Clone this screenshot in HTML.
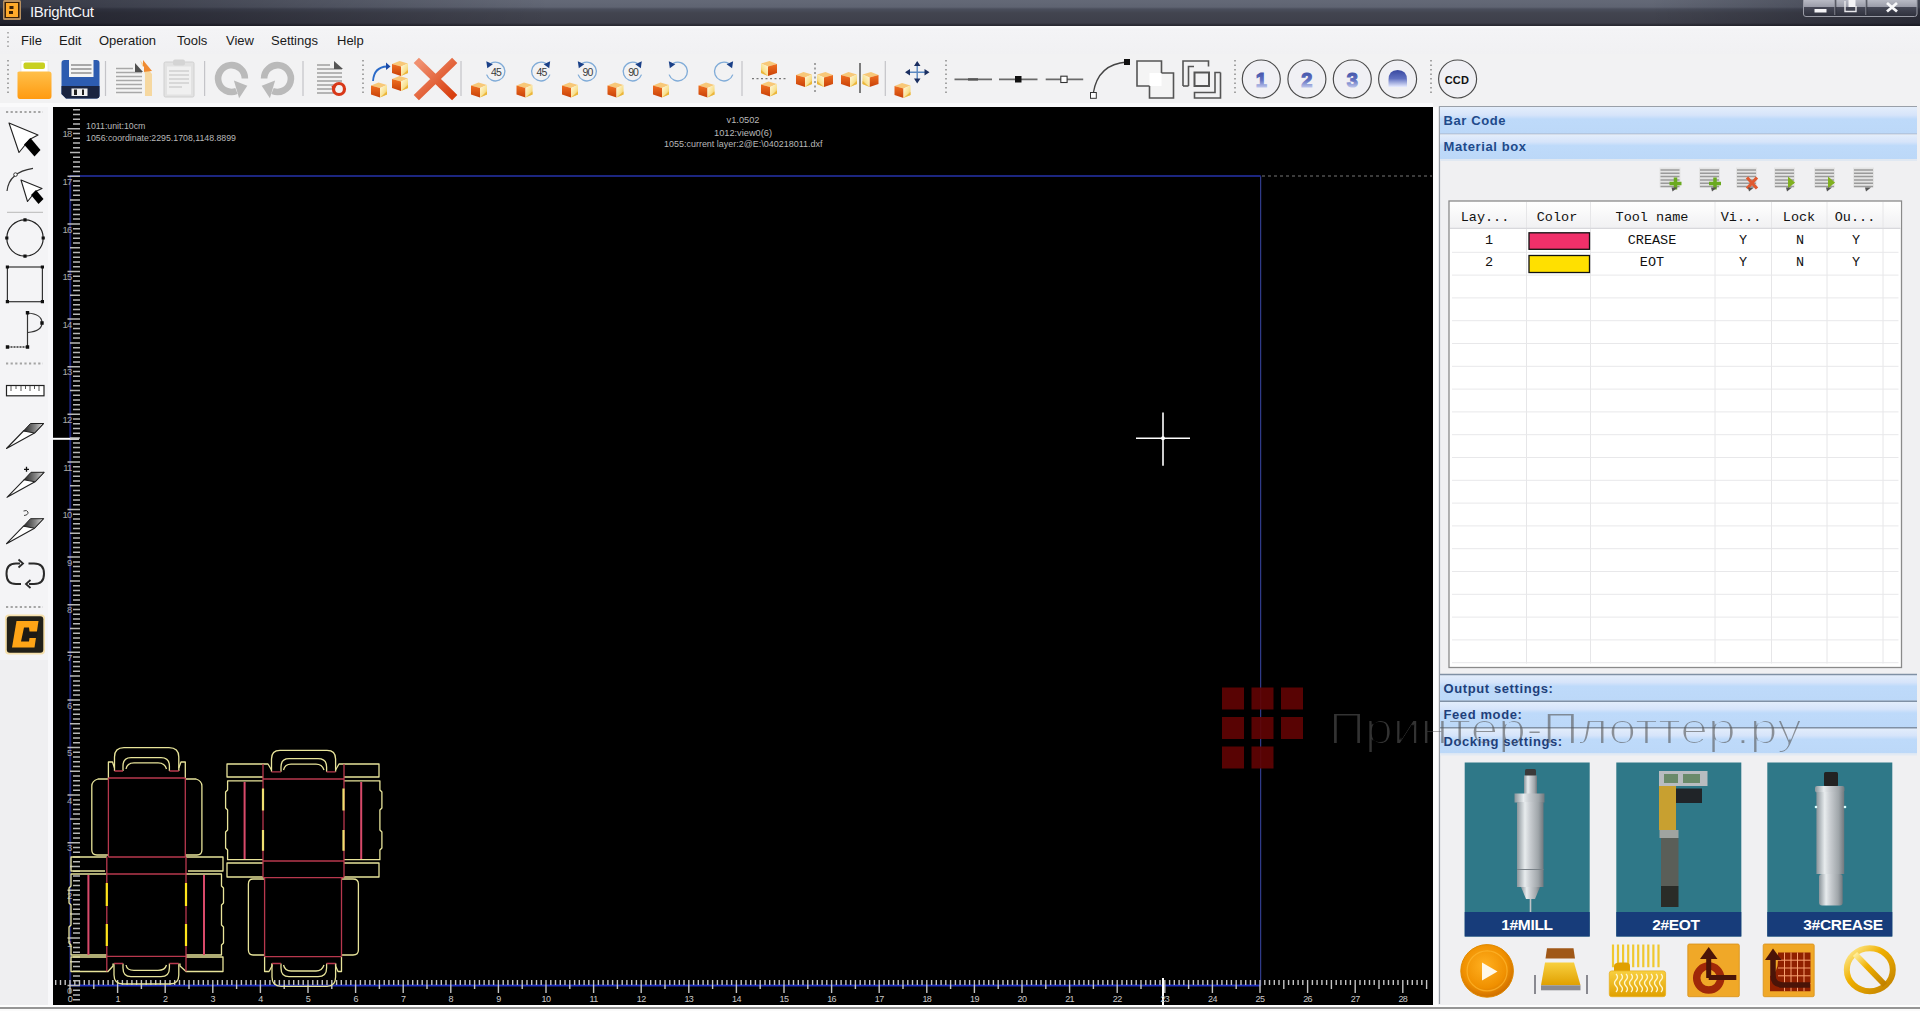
<!DOCTYPE html>
<html><head><meta charset="utf-8">
<style>
*{margin:0;padding:0;box-sizing:border-box}
html,body{width:1920px;height:1011px;overflow:hidden;background:#f2f2f4;font-family:"Liberation Sans",sans-serif}
.abs{position:absolute}
svg.full{position:absolute;left:0;top:0;width:1920px;height:1011px;overflow:visible}
#title{left:0;top:0;width:1920px;height:26px;background:linear-gradient(#646977 0px,#5f6472 7px,#4a4e5c 9px,#42444f 13px,#3e3f4a 23px,#2a2a33 25px,#2a2a33 26px)}
#title .t{left:30px;top:3px;color:#f4f4f8;font-size:15px;letter-spacing:-0.3px}
#title .shade{left:0;top:0;width:1920px;height:26px;background:linear-gradient(to right,rgba(0,0,10,0.45) 0px,rgba(0,0,10,0.3) 200px,rgba(0,0,0,0) 550px,rgba(0,0,0,0) 1650px,rgba(0,0,10,0.35) 1920px)}
#menubar{left:0;top:26px;width:1920px;height:28px;background:linear-gradient(#fdfdfd 0px,#f4f4f6 3px,#f1f1f3 28px)}
#menubar span{position:absolute;top:7px;font-size:13px;color:#1a1a1a}
#toolbar{left:0;top:54px;width:1920px;height:53px;background:#f2f2f3}
#leftp{left:0;top:107px;width:53px;height:898px;background:#efeff1}
#canvas{left:53px;top:107px;width:1380px;height:898px;background:#000}
#rightp{left:1433px;top:107px;width:487px;height:898px;background:#f0f0f2}
#bottom{left:0;top:1005px;width:1920px;height:6px;background:linear-gradient(#fdfdfd 0,#fdfdfd 2.5px,#959595 2.5px,#959595 4.3px,#fafafa 4.3px)}
#gap{left:1433px;top:107px;width:5px;height:898px;background:#fbfbfc}
</style></head><body>
<div id="title" class="abs">
  <div class="shade abs"></div>
  <div class="t abs">IBrightCut</div>
</div>
<div id="menubar" class="abs">
  <span style="left:21px">File</span>
  <span style="left:59px">Edit</span>
  <span style="left:99px">Operation</span>
  <span style="left:177px">Tools</span>
  <span style="left:226px">View</span>
  <span style="left:271px">Settings</span>
  <span style="left:337px">Help</span>
</div>
<div id="toolbar" class="abs"></div>
<div id="leftp" class="abs"></div>
<div id="canvas" class="abs"></div>
<div id="rightp" class="abs"></div>
<div id="gap" class="abs"></div>
<div id="bottom" class="abs"></div>
<svg class="full" viewBox="0 0 1920 1011">
<defs>
<linearGradient id="gWin" x1="0" y1="0" x2="0" y2="1"><stop offset="0" stop-color="#b8bac4"/><stop offset="0.42" stop-color="#9a9ca8"/><stop offset="0.45" stop-color="#464856"/><stop offset="1" stop-color="#2e303c"/></linearGradient>
</defs>
<!-- app icon -->
<rect x="3" y="0" width="18" height="20" rx="1.5" fill="#b89060"/>
<rect x="4.5" y="2" width="15" height="16" fill="#3a2006"/>
<rect x="6" y="3" width="12" height="14" fill="#ffaa2a"/>
<path d="M9.5 6H13.5V9H9.5ZM9 11H13V14H9Z" fill="#3a2006"/>
<!-- window controls -->
<path d="M1803.5 0V14Q1803.5 16.5 1806 16.5H1914.5Q1917 16.5 1917 14V0" fill="url(#gWin)" stroke="#9a9ca6" stroke-width="1"/>
<path d="M1835 0V15M1866 0V15" stroke="#8a8c96" stroke-width="1.3"/>
<path d="M1835.8 0V15M1866.8 0V15" stroke="#2a2c36" stroke-width="0.8"/>
<rect x="1814.5" y="9" width="12" height="3.5" fill="#f4f4f6"/>
<path d="M1845 1V11.5H1856V6" fill="none" stroke="#e8e8ec" stroke-width="1.4"/>
<rect x="1848.5" y="0" width="7" height="7" fill="#f4f4f6"/>
<path d="M1887 3L1897 11.5M1897 3L1887 11.5" stroke="#f8f8fa" stroke-width="2.8"/>

<path d="M8 32V48" stroke="#9a9a9a" stroke-width="1.5" stroke-dasharray="1.5 3"/>
<defs>
<linearGradient id="gFold" x1="0" y1="0" x2="0" y2="1"><stop offset="0" stop-color="#ffc04a"/><stop offset="1" stop-color="#ff9a10"/></linearGradient>
<linearGradient id="gCubeL" x1="0" y1="0" x2="0" y2="1"><stop offset="0" stop-color="#f07020"/><stop offset="1" stop-color="#c84008"/></linearGradient>
<linearGradient id="gCubeR" x1="0" y1="0" x2="1" y2="1"><stop offset="0" stop-color="#fffbe0"/><stop offset="0.6" stop-color="#f8e090"/><stop offset="1" stop-color="#f0b020"/></linearGradient>
<linearGradient id="gX" x1="0" y1="0" x2="1" y2="1"><stop offset="0" stop-color="#f09070"/><stop offset="1" stop-color="#d84010"/></linearGradient>
<linearGradient id="gNum" x1="0" y1="0" x2="0" y2="1"><stop offset="0" stop-color="#3848a0"/><stop offset="0.5" stop-color="#6070c0"/><stop offset="1" stop-color="#e8ecff"/></linearGradient>
<g id="cube">
<path d="M0 3L7.5 0L16 2.5L9 5.5Z" fill="#f8c878"/>
<path d="M0 3L9 5.5V15L0 12Z" fill="url(#gCubeL)"/>
<path d="M9 5.5L16 2.5V12L9 15Z" fill="url(#gCubeR)"/>
<path d="M9 15L16 12V9Z" fill="#e8b030" opacity="0.8"/>
</g>
<g id="cubeM" transform="translate(16 0) scale(-1 1)"><use href="#cube"/></g>
<g id="grip"><path d="M0 0V36" stroke="#8a8a8a" stroke-width="1.5" stroke-dasharray="1.5 3"/></g>
<g id="rcirc" fill="none"><circle cx="0" cy="0" r="9.5" stroke="#7aaad8" stroke-width="1.2"/></g>
</defs>
<!-- grips & separators -->
<use href="#grip" x="8" y="60"/>
<use href="#grip" x="363" y="60"/>
<use href="#grip" x="946" y="60"/>
<use href="#grip" x="1235" y="60"/>
<use href="#grip" x="1431" y="60"/>
<path d="M105.5 61V96M204.6 61V96M303 61V96M461 61V96M742 61V96M885.3 61V96" stroke="#c4c4c8" stroke-width="1.2"/>
<!-- folder -->
<rect x="21" y="60.5" width="27" height="16" fill="#fff" stroke="#e0e0e0" stroke-width="0.6"/>
<rect x="23.5" y="62.5" width="21.5" height="6.5" rx="2" fill="#c8d020"/>
<rect x="23" y="72" width="6" height="2.5" fill="#8aa8d8"/>
<path d="M17.5 73.5Q17 71.5 19.5 71.5H49Q51.5 71.5 51.5 74V96Q51.5 99 49 99H20Q17.5 99 17.5 96Z" fill="url(#gFold)"/>
<!-- floppy -->
<path d="M61.5 63Q61.5 60 64.5 60H96.5Q99.5 60 99.5 63V95.5Q99.5 98.5 96.5 98.5H66L61.5 94Z" fill="#2d5cb0"/>
<path d="M61.5 86V94L66 98.5H96.5Q99.5 98.5 99.5 95.5V86Z" fill="#1a2440"/>
<rect x="69" y="60" width="24.5" height="17" fill="#f4f4f4"/>
<path d="M71 65H91.5M71 69H91.5M71 73H91.5" stroke="#909090" stroke-width="1.5"/>
<rect x="71.5" y="88.5" width="16" height="7.5" fill="#f0f0f0"/>
<rect x="74" y="89.5" width="3" height="5.5" fill="#222"/><rect x="82" y="89.5" width="2" height="5.5" fill="#222"/>
<!-- copy -->
<path d="M140 60L152 74V96H145V74Z" fill="#f6d8a0"/>
<path d="M143 60L152 71L143 72Z" fill="#f08a30"/>
<rect x="115" y="66.5" width="29" height="30" fill="#f4f4f4"/>
<path d="M116 68.5H133M116 72.5H142M116 76.5H142M116 80.5H142M116 84.5H142M116 88.5H142M116 92.5H142" stroke="#a8a8a8" stroke-width="1.6"/>
<path d="M135 63L143 72H135Z" fill="#505050"/>
<!-- clipboard gray -->
<rect x="164" y="62" width="30" height="35" rx="1.5" fill="#e2e2e2" stroke="#d0d0d0"/>
<rect x="173" y="59.5" width="12" height="6" rx="2" fill="#d4d4d4"/>
<rect x="167" y="66.5" width="24" height="28" fill="#f0f0f0"/>
<path d="M169 71H189M169 75H189M169 79H189M169 83H189M169 87H182" stroke="#cfcfcf" stroke-width="1.4"/>
<!-- redo/undo gray -->
<path d="M244.9 78.5A13.4 13.4 0 1 0 236.5 91" fill="none" stroke="#bababa" stroke-width="6.6"/>
<path d="M233.9 80.4L247.3 85.7L239.1 98.2Z" fill="#bababa"/>
<path d="M264.1 78.5A13.4 13.4 0 1 1 272.5 91" fill="none" stroke="#bababa" stroke-width="6.6"/>
<path d="M275.1 80.4L261.7 85.7L269.9 98.2Z" fill="#bababa"/>
<!-- doc with red arrow -->
<rect x="316" y="62" width="26" height="34" fill="#f2f2f2"/>
<path d="M317 65H330M317 69H342M317 73H342M317 77H342M317 81H342M317 85H334M317 89H334M317 93H334" stroke="#a0a0a0" stroke-width="1.6"/>
<path d="M334 61L343 69H334Z" fill="#555"/>
<circle cx="339" cy="89" r="5.5" fill="none" stroke="#d83818" stroke-width="3.2"/>
<path d="M331.5 86L337 85L333 92Z" fill="#d83818"/>
<!-- cubes with arrow -->
<use href="#cube" x="371" y="82.5"/>
<use href="#cube" x="392" y="61"/>
<use href="#cube" x="392" y="76"/>
<path d="M373 81Q374 67 387 66.5" fill="none" stroke="#2a6ac8" stroke-width="1.8"/>
<path d="M386 62.5L390.5 66.5L386 70Z" fill="#1a4aa8"/>
<!-- red X -->
<path d="M419 63L452 95M452 63L419 95" stroke="url(#gX)" stroke-width="7.5" stroke-linecap="square"/>
<!-- rotate icons -->
<g font-family="Liberation Sans, sans-serif" font-size="10.5" fill="#3a3a3a" text-anchor="middle" letter-spacing="-0.9">
<use href="#cube" x="471" y="82.5"/>
<path d="M490.8 63.4A9.4 9.4 0 1 1 486.6 74.6" fill="none" stroke="#80acd8" stroke-width="1.3"/>
<path d="M486.3 61.3L492.8 64.3L487.3 68.3Z" fill="#1a4088"/>
<text x="496.0" y="76.2">45</text>
<use href="#cube" x="516.5" y="82.5"/>
<path d="M545.7 63.4A9.4 9.4 0 1 0 549.9 74.6" fill="none" stroke="#80acd8" stroke-width="1.3"/>
<path d="M550.2 61.3L543.7 64.3L549.2 68.3Z" fill="#1a4088"/>
<text x="541.5" y="76.2">45</text>
<use href="#cube" x="562" y="82.5"/>
<path d="M582.3 63.4A9.4 9.4 0 1 1 578.1 74.6" fill="none" stroke="#80acd8" stroke-width="1.3"/>
<path d="M577.8 61.3L584.3 64.3L578.8 68.3Z" fill="#1a4088"/>
<text x="587.5" y="76.2">90</text>
<use href="#cube" x="607.5" y="82.5"/>
<path d="M637.3 63.4A9.4 9.4 0 1 0 641.5 74.6" fill="none" stroke="#80acd8" stroke-width="1.3"/>
<path d="M641.8 61.3L635.3 64.3L640.8 68.3Z" fill="#1a4088"/>
<text x="633.1" y="76.2">90</text>
<use href="#cube" x="653" y="82.5"/>
<path d="M673.3 63.4A9.4 9.4 0 1 1 669.1 74.6" fill="none" stroke="#80acd8" stroke-width="1.3"/>
<path d="M668.8 61.3L675.3 64.3L669.8 68.3Z" fill="#1a4088"/>
<use href="#cube" x="698.5" y="82.5"/>
<path d="M728.6 63.4A9.4 9.4 0 1 0 732.8 74.6" fill="none" stroke="#80acd8" stroke-width="1.3"/>
<path d="M733.1 61.3L726.6 64.3L732.1 68.3Z" fill="#1a4088"/>
</g>
<!-- mirror icons -->
<use href="#cubeM" x="761" y="61"/>
<path d="M752 78.7H786" stroke="#777" stroke-width="1.3" stroke-dasharray="2 2.5"/>
<use href="#cube" x="761" y="81.5"/>
<use href="#cube" x="796" y="72"/>
<path d="M815 63V93" stroke="#777" stroke-width="1.3" stroke-dasharray="2 2.5"/>
<use href="#cubeM" x="817" y="72"/>
<use href="#cube" x="841" y="72"/>
<path d="M860 63V93" stroke="#555" stroke-width="1.5"/>
<use href="#cubeM" x="862.5" y="72"/>
<!-- move -->
<use href="#cube" x="894.5" y="83"/>
<path d="M917.2 64V80.5M908 72.2H926.5" stroke="#5a88c0" stroke-width="1.4"/>
<path d="M914 66L917.2 61L920.5 66ZM914 78.5L917.2 83.5L920.5 78.5ZM910 69L905 72.2L910 75.5ZM924.5 69L929.5 72.2L924.5 75.5Z" fill="#1a2e60"/>
<!-- line types -->
<path d="M954.5 79.4H992" stroke="#6a6a6a" stroke-width="1.6"/>
<path d="M968 79.4H978" stroke="#555" stroke-width="2.4"/>
<path d="M999 79.4H1037.5" stroke="#6a6a6a" stroke-width="1.6"/>
<rect x="1015" y="76" width="6.5" height="6.5" fill="#111"/>
<path d="M1045.7 79.4H1083.2" stroke="#6a6a6a" stroke-width="1.6"/>
<rect x="1060.8" y="76.2" width="6.3" height="6.3" fill="#fff" stroke="#333" stroke-width="1.1"/>
<path d="M1093.3 93Q1098 64 1127 62" fill="none" stroke="#444" stroke-width="1.3"/>
<rect x="1124" y="59" width="6" height="6" fill="#111"/>
<rect x="1090.5" y="92.5" width="5.8" height="5.8" fill="#fff" stroke="#333" stroke-width="1"/>
<!-- union squares -->
<path d="M1137 61H1161.5V73H1173.5V98H1149.5V86H1137Z" fill="#f4f4f4" stroke="#555" stroke-width="1.6"/>
<rect x="1149.5" y="73" width="12" height="13" fill="#fff"/>
<!-- nested -->
<g fill="none" stroke="#555" stroke-width="1.6">
<path d="M1183 86V61H1208.5V66.5M1188.5 86V66.5H1194"/>
<path d="M1183 86H1188.5"/>
<path d="M1220.5 72.5V98H1194.5V92.5H1215V72.5H1220.5"/>
<rect x="1194.5" y="72.5" width="14.5" height="13.5" stroke-width="2"/>
</g>
<!-- circles -->
<g fill="#f0f0f4" stroke="#4a4a4a" stroke-width="1.15">
<circle cx="1261.3" cy="79" r="19"/><circle cx="1306.9" cy="79" r="19"/><circle cx="1352.3" cy="79" r="19"/><circle cx="1397.6" cy="79" r="19"/><circle cx="1457.6" cy="79" r="19"/>
</g>
<g font-family="Liberation Sans, sans-serif" font-weight="bold" font-size="20" fill="url(#gNum)" stroke="url(#gNum)" stroke-width="1.2" text-anchor="middle">
<text x="1261.3" y="87">1</text><text x="1306.9" y="87">2</text><text x="1352.3" y="87">3</text>
</g>
<path d="M1388.5 87V80Q1388.5 70 1397.6 70Q1407 70 1407 80V87Z" fill="url(#gNum)"/>
<text x="1457" y="84" font-family="Liberation Sans, sans-serif" font-weight="bold" font-size="11" fill="#111" text-anchor="middle" letter-spacing="0.3">CCD</text>

<defs>
<linearGradient id="gKnife" x1="0" y1="0" x2="1" y2="0"><stop offset="0" stop-color="#222"/><stop offset="0.6" stop-color="#888"/><stop offset="1" stop-color="#ddd"/></linearGradient>
<g id="knife">
<path d="M0 25.5L17 8L37 0.5L28 10Z" fill="#fff" stroke="#222" stroke-width="1.1" stroke-linejoin="round"/>
<path d="M17 8L24 0.5H37L28 10Z" fill="url(#gKnife)" stroke="#222" stroke-width="1"/>
</g>
<linearGradient id="gC" x1="0" y1="0" x2="0" y2="1"><stop offset="0" stop-color="#ffb020"/><stop offset="1" stop-color="#f08a00"/></linearGradient>
</defs>
<rect x="0" y="103" width="1433" height="4" fill="#fafafb"/>
<rect x="0" y="107" width="53" height="553" fill="#f4f4f6"/>
<rect x="48" y="107" width="5" height="898" fill="#f8f8fa"/>
<path d="M6 112H43M6 363.4H43M6 607H43" stroke="#a4a4a4" stroke-width="2" stroke-dasharray="2.2 2.4"/>
<!-- arrow 1 -->
<path d="M9 123L38 135L29.5 139.5L19 152.5Z" fill="#fff" stroke="#222" stroke-width="1.1" stroke-linejoin="round"/>
<path d="M24 144.5L30.5 138L40.5 150L34.5 156.5Z" fill="#000"/>
<!-- arrow 2 with arc -->
<path d="M7 191Q9 172 33 168.3" fill="none" stroke="#333" stroke-width="1.2"/>
<circle cx="15.5" cy="174.6" r="1.8" fill="#fff" stroke="#333" stroke-width="1"/>
<path d="M21 180L42 188.5L35.5 191.5L27.5 201.5Z" fill="#fff" stroke="#222" stroke-width="1.1" stroke-linejoin="round"/>
<path d="M31 195L36 190L43.5 199L38.5 204Z" fill="#000"/>
<path d="M7 212.3H43" stroke="#c4c4c4" stroke-width="1.2"/>
<!-- circle -->
<circle cx="25" cy="238" r="18.2" fill="none" stroke="#222" stroke-width="1.2"/>
<path d="M25 219.8h0M25 256.2h0M6.8 238h0M43.2 238h0" stroke="#111" stroke-width="3.2" stroke-linecap="square"/>
<!-- rect -->
<rect x="7.4" y="267" width="35" height="34.7" fill="none" stroke="#333" stroke-width="1.2"/>
<path d="M7.4 267h0M42.4 267h0M7.4 301.7h0M42.4 301.7h0" stroke="#111" stroke-width="3.2" stroke-linecap="square"/>
<!-- polyline -->
<path d="M27.5 313V347M27.5 313Q42 314 42 323Q42 331 28 332.5" fill="none" stroke="#333" stroke-width="1.2"/>
<path d="M7.5 347H27.5" stroke="#333" stroke-width="1.5" stroke-dasharray="2 1"/>
<path d="M27.5 312.8h0M42 323h0M27.5 347h0M7.5 347h0" stroke="#111" stroke-width="3.4" stroke-linecap="square"/>
<!-- ruler -->
<rect x="6.5" y="385.5" width="37.5" height="10.3" fill="#fff" stroke="#222" stroke-width="1.2"/>
<path d="M11 386V391M16 386V389M21 386V391M25.5 386V389M30 386V391M34.5 386V389M39 386V391" stroke="#555" stroke-width="1"/>
<!-- knives -->
<use href="#knife" x="6.5" y="423"/>
<use href="#knife" x="7" y="471.8"/>
<path d="M24 469.3H29M26.5 466.8V471.8" stroke="#111" stroke-width="1.3"/>
<use href="#knife" x="6.5" y="518.2"/>
<path d="M23.5 511Q27 509.5 28 512Q28.5 515 24 515.5" fill="none" stroke="#444" stroke-width="1"/>
<!-- loop -->
<path d="M20 563.5H16Q6.5 563.5 6.5 573.7Q6.5 584 16 584H21M28.5 563.5H34Q44 563.5 44 573.7Q44 584 34 584H29" fill="none" stroke="#2a2a2a" stroke-width="2"/>
<path d="M18.5 559.5L23 563.5L18.5 567.5M30.5 580L26 584L30.5 588" fill="none" stroke="#2a2a2a" stroke-width="1.8"/>
<!-- C logo -->
<rect x="5" y="614.5" width="40" height="40" rx="4" fill="#f8d070" opacity="0.55"/>
<rect x="6.8" y="616.3" width="36.5" height="36.5" rx="3" fill="#222018"/>
<path d="M16.5 621H38.5L34.5 647.5H12Z" fill="#ffa516"/>
<path d="M38 631.5H29.5L29 627.5H24L21 641.5H29L29.5 638H36.5Z" fill="#1e1a14"/>

<g fill="none">
<path d="M70.2 176V985.5" stroke="#181f70" stroke-width="2"/>
<path d="M1260.7 176V985.5" stroke="#3a48a8" stroke-width="1"/>
<path d="M70 176H1260.7" stroke="#1c2680" stroke-width="2"/>
<path d="M70 985.5H1260.7" stroke="#2030c0" stroke-width="2"/>
<path d="M1262 176H1432" stroke="#777" stroke-width="1" stroke-dasharray="3 3"/>
<path d="M1136 438.3H1190M1163 412.4V465.7" stroke="#fff" stroke-width="1.6"/>
<circle cx="1163" cy="438.3" r="2" fill="#fff"/>
<path d="M53 438.8H79" stroke="#fff" stroke-width="2"/>
<path d="M1163 978V1005" stroke="#fff" stroke-width="2"/>
</g>
<g fill="#b8b8b8" font-family="Liberation Sans, sans-serif" font-size="9">
<text x="86" y="128.8" textLength="59.4" lengthAdjust="spacingAndGlyphs">1011:unit:10cm</text>
<text x="86" y="140.7" textLength="150" lengthAdjust="spacingAndGlyphs">1056:coordinate:2295.1708,1148.8899</text>
<text x="726.6" y="123" textLength="32.8" lengthAdjust="spacingAndGlyphs">v1.0502</text>
<text x="714" y="136.3" textLength="58" lengthAdjust="spacingAndGlyphs">1012:view0(6)</text>
<text x="664" y="147.3" textLength="158.5" lengthAdjust="spacingAndGlyphs">1055:current layer:2@E:\040218011.dxf</text>
</g>

<path d="M67.5 985.5H80 M73 980.7H80 M73 976.0H80 M73 971.2H80 M73 966.5H80 M70 961.7H80 M73 956.9H80 M73 952.2H80 M73 947.4H80 M73 942.7H80 M67.5 937.9H80 M73 933.1H80 M73 928.4H80 M73 923.6H80 M73 918.9H80 M70 914.1H80 M73 909.3H80 M73 904.6H80 M73 899.8H80 M73 895.1H80 M67.5 890.3H80 M73 885.5H80 M73 880.8H80 M73 876.0H80 M73 871.3H80 M70 866.5H80 M73 861.7H80 M73 857.0H80 M73 852.2H80 M73 847.5H80 M67.5 842.7H80 M73 837.9H80 M73 833.2H80 M73 828.4H80 M73 823.7H80 M70 818.9H80 M73 814.1H80 M73 809.4H80 M73 804.6H80 M73 799.9H80 M67.5 795.1H80 M73 790.3H80 M73 785.6H80 M73 780.8H80 M73 776.1H80 M70 771.3H80 M73 766.5H80 M73 761.8H80 M73 757.0H80 M73 752.3H80 M67.5 747.5H80 M73 742.7H80 M73 738.0H80 M73 733.2H80 M73 728.5H80 M70 723.7H80 M73 718.9H80 M73 714.2H80 M73 709.4H80 M73 704.7H80 M67.5 699.9H80 M73 695.1H80 M73 690.4H80 M73 685.6H80 M73 680.9H80 M70 676.1H80 M73 671.3H80 M73 666.6H80 M73 661.8H80 M73 657.1H80 M67.5 652.3H80 M73 647.5H80 M73 642.8H80 M73 638.0H80 M73 633.3H80 M70 628.5H80 M73 623.7H80 M73 619.0H80 M73 614.2H80 M73 609.5H80 M67.5 604.7H80 M73 599.9H80 M73 595.2H80 M73 590.4H80 M73 585.7H80 M70 580.9H80 M73 576.1H80 M73 571.4H80 M73 566.6H80 M73 561.9H80 M67.5 557.1H80 M73 552.3H80 M73 547.6H80 M73 542.8H80 M73 538.1H80 M70 533.3H80 M73 528.5H80 M73 523.8H80 M73 519.0H80 M73 514.3H80 M67.5 509.5H80 M73 504.7H80 M73 500.0H80 M73 495.2H80 M73 490.5H80 M70 485.7H80 M73 480.9H80 M73 476.2H80 M73 471.4H80 M73 466.7H80 M67.5 461.9H80 M73 457.1H80 M73 452.4H80 M73 447.6H80 M73 442.9H80 M70 438.1H80 M73 433.3H80 M73 428.6H80 M73 423.8H80 M73 419.1H80 M67.5 414.3H80 M73 409.5H80 M73 404.8H80 M73 400.0H80 M73 395.3H80 M70 390.5H80 M73 385.7H80 M73 381.0H80 M73 376.2H80 M73 371.5H80 M67.5 366.7H80 M73 361.9H80 M73 357.2H80 M73 352.4H80 M73 347.7H80 M70 342.9H80 M73 338.1H80 M73 333.4H80 M73 328.6H80 M73 323.9H80 M67.5 319.1H80 M73 314.3H80 M73 309.6H80 M73 304.8H80 M73 300.1H80 M70 295.3H80 M73 290.5H80 M73 285.8H80 M73 281.0H80 M73 276.3H80 M67.5 271.5H80 M73 266.7H80 M73 262.0H80 M73 257.2H80 M73 252.5H80 M70 247.7H80 M73 242.9H80 M73 238.2H80 M73 233.4H80 M73 228.7H80 M67.5 223.9H80 M73 219.1H80 M73 214.4H80 M73 209.6H80 M73 204.9H80 M70 200.1H80 M73 195.3H80 M73 190.6H80 M73 185.8H80 M73 181.1H80 M67.5 176.3H80 M73 171.5H80 M73 166.8H80 M73 162.0H80 M73 157.3H80 M70 152.5H80 M73 147.7H80 M73 143.0H80 M73 138.2H80 M73 133.5H80 M67.5 128.7H80 M73 123.9H80 M73 119.2H80 M73 114.4H80 M73 109.7H80 M73 990.3H80 M73 995.0H80 M73 999.8H80" stroke="#b8b8b8" stroke-width="1.5" fill="none"/>
<g fill="#a8a8a8" font-size="9.5" font-family="Liberation Sans, sans-serif" letter-spacing="-0.8"><text x="71.5" y="994.1" text-anchor="end">0</text><text x="71.5" y="946.5" text-anchor="end">1</text><text x="71.5" y="898.9" text-anchor="end">2</text><text x="71.5" y="851.3" text-anchor="end">3</text><text x="71.5" y="803.7" text-anchor="end">4</text><text x="71.5" y="756.1" text-anchor="end">5</text><text x="71.5" y="708.5" text-anchor="end">6</text><text x="71.5" y="660.9" text-anchor="end">7</text><text x="71.5" y="613.3" text-anchor="end">8</text><text x="71.5" y="565.7" text-anchor="end">9</text><text x="71.5" y="518.1" text-anchor="end">10</text><text x="71.5" y="470.5" text-anchor="end">11</text><text x="71.5" y="422.9" text-anchor="end">12</text><text x="71.5" y="375.3" text-anchor="end">13</text><text x="71.5" y="327.7" text-anchor="end">14</text><text x="71.5" y="280.1" text-anchor="end">15</text><text x="71.5" y="232.5" text-anchor="end">16</text><text x="71.5" y="184.9" text-anchor="end">17</text><text x="71.5" y="137.3" text-anchor="end">18</text></g>
<path d="M70.0 980V993 M74.8 980V985 M79.5 980V985 M84.3 980V985 M89.0 980V985 M93.8 980V989 M98.6 980V985 M103.3 980V985 M108.1 980V985 M112.8 980V985 M117.6 980V993 M122.4 980V985 M127.1 980V985 M131.9 980V985 M136.6 980V985 M141.4 980V989 M146.2 980V985 M150.9 980V985 M155.7 980V985 M160.4 980V985 M165.2 980V993 M170.0 980V985 M174.7 980V985 M179.5 980V985 M184.2 980V985 M189.0 980V989 M193.8 980V985 M198.5 980V985 M203.3 980V985 M208.0 980V985 M212.8 980V993 M217.6 980V985 M222.3 980V985 M227.1 980V985 M231.8 980V985 M236.6 980V989 M241.4 980V985 M246.1 980V985 M250.9 980V985 M255.6 980V985 M260.4 980V993 M265.2 980V985 M269.9 980V985 M274.7 980V985 M279.4 980V985 M284.2 980V989 M289.0 980V985 M293.7 980V985 M298.5 980V985 M303.2 980V985 M308.0 980V993 M312.8 980V985 M317.5 980V985 M322.3 980V985 M327.0 980V985 M331.8 980V989 M336.6 980V985 M341.3 980V985 M346.1 980V985 M350.8 980V985 M355.6 980V993 M360.4 980V985 M365.1 980V985 M369.9 980V985 M374.6 980V985 M379.4 980V989 M384.2 980V985 M388.9 980V985 M393.7 980V985 M398.4 980V985 M403.2 980V993 M408.0 980V985 M412.7 980V985 M417.5 980V985 M422.2 980V985 M427.0 980V989 M431.8 980V985 M436.5 980V985 M441.3 980V985 M446.0 980V985 M450.8 980V993 M455.6 980V985 M460.3 980V985 M465.1 980V985 M469.8 980V985 M474.6 980V989 M479.4 980V985 M484.1 980V985 M488.9 980V985 M493.6 980V985 M498.4 980V993 M503.2 980V985 M507.9 980V985 M512.7 980V985 M517.4 980V985 M522.2 980V989 M527.0 980V985 M531.7 980V985 M536.5 980V985 M541.2 980V985 M546.0 980V993 M550.8 980V985 M555.5 980V985 M560.3 980V985 M565.0 980V985 M569.8 980V989 M574.6 980V985 M579.3 980V985 M584.1 980V985 M588.8 980V985 M593.6 980V993 M598.4 980V985 M603.1 980V985 M607.9 980V985 M612.6 980V985 M617.4 980V989 M622.2 980V985 M626.9 980V985 M631.7 980V985 M636.4 980V985 M641.2 980V993 M646.0 980V985 M650.7 980V985 M655.5 980V985 M660.2 980V985 M665.0 980V989 M669.8 980V985 M674.5 980V985 M679.3 980V985 M684.0 980V985 M688.8 980V993 M693.6 980V985 M698.3 980V985 M703.1 980V985 M707.8 980V985 M712.6 980V989 M717.4 980V985 M722.1 980V985 M726.9 980V985 M731.6 980V985 M736.4 980V993 M741.2 980V985 M745.9 980V985 M750.7 980V985 M755.4 980V985 M760.2 980V989 M765.0 980V985 M769.7 980V985 M774.5 980V985 M779.2 980V985 M784.0 980V993 M788.8 980V985 M793.5 980V985 M798.3 980V985 M803.0 980V985 M807.8 980V989 M812.6 980V985 M817.3 980V985 M822.1 980V985 M826.8 980V985 M831.6 980V993 M836.4 980V985 M841.1 980V985 M845.9 980V985 M850.6 980V985 M855.4 980V989 M860.2 980V985 M864.9 980V985 M869.7 980V985 M874.4 980V985 M879.2 980V993 M884.0 980V985 M888.7 980V985 M893.5 980V985 M898.2 980V985 M903.0 980V989 M907.8 980V985 M912.5 980V985 M917.3 980V985 M922.0 980V985 M926.8 980V993 M931.6 980V985 M936.3 980V985 M941.1 980V985 M945.8 980V985 M950.6 980V989 M955.4 980V985 M960.1 980V985 M964.9 980V985 M969.6 980V985 M974.4 980V993 M979.2 980V985 M983.9 980V985 M988.7 980V985 M993.4 980V985 M998.2 980V989 M1003.0 980V985 M1007.7 980V985 M1012.5 980V985 M1017.2 980V985 M1022.0 980V993 M1026.8 980V985 M1031.5 980V985 M1036.3 980V985 M1041.0 980V985 M1045.8 980V989 M1050.6 980V985 M1055.3 980V985 M1060.1 980V985 M1064.8 980V985 M1069.6 980V993 M1074.4 980V985 M1079.1 980V985 M1083.9 980V985 M1088.6 980V985 M1093.4 980V989 M1098.2 980V985 M1102.9 980V985 M1107.7 980V985 M1112.4 980V985 M1117.2 980V993 M1122.0 980V985 M1126.7 980V985 M1131.5 980V985 M1136.2 980V985 M1141.0 980V989 M1145.8 980V985 M1150.5 980V985 M1155.3 980V985 M1160.0 980V985 M1164.8 980V993 M1169.6 980V985 M1174.3 980V985 M1179.1 980V985 M1183.8 980V985 M1188.6 980V989 M1193.4 980V985 M1198.1 980V985 M1202.9 980V985 M1207.6 980V985 M1212.4 980V993 M1217.2 980V985 M1221.9 980V985 M1226.7 980V985 M1231.4 980V985 M1236.2 980V989 M1241.0 980V985 M1245.7 980V985 M1250.5 980V985 M1255.2 980V985 M1260.0 980V993 M1264.8 980V985 M1269.5 980V985 M1274.3 980V985 M1279.0 980V985 M1283.8 980V989 M1288.6 980V985 M1293.3 980V985 M1298.1 980V985 M1302.8 980V985 M1307.6 980V993 M1312.4 980V985 M1317.1 980V985 M1321.9 980V985 M1326.6 980V985 M1331.4 980V989 M1336.2 980V985 M1340.9 980V985 M1345.7 980V985 M1350.4 980V985 M1355.2 980V993 M1360.0 980V985 M1364.7 980V985 M1369.5 980V985 M1374.2 980V985 M1379.0 980V989 M1383.8 980V985 M1388.5 980V985 M1393.3 980V985 M1398.0 980V985 M1402.8 980V993 M1407.6 980V985 M1412.3 980V985 M1417.1 980V985 M1421.8 980V985 M1426.6 980V989 M65.2 980V985 M60.5 980V985 M55.7 980V985" stroke="#c4c4c4" stroke-width="1.4" fill="none"/>
<g fill="#c8c8c8" font-size="9" font-family="Liberation Sans, sans-serif" letter-spacing="-0.6"><text x="70.0" y="1002" text-anchor="middle">0</text><text x="117.6" y="1002" text-anchor="middle">1</text><text x="165.2" y="1002" text-anchor="middle">2</text><text x="212.8" y="1002" text-anchor="middle">3</text><text x="260.4" y="1002" text-anchor="middle">4</text><text x="308.0" y="1002" text-anchor="middle">5</text><text x="355.6" y="1002" text-anchor="middle">6</text><text x="403.2" y="1002" text-anchor="middle">7</text><text x="450.8" y="1002" text-anchor="middle">8</text><text x="498.4" y="1002" text-anchor="middle">9</text><text x="546.0" y="1002" text-anchor="middle">10</text><text x="593.6" y="1002" text-anchor="middle">11</text><text x="641.2" y="1002" text-anchor="middle">12</text><text x="688.8" y="1002" text-anchor="middle">13</text><text x="736.4" y="1002" text-anchor="middle">14</text><text x="784.0" y="1002" text-anchor="middle">15</text><text x="831.6" y="1002" text-anchor="middle">16</text><text x="879.2" y="1002" text-anchor="middle">17</text><text x="926.8" y="1002" text-anchor="middle">18</text><text x="974.4" y="1002" text-anchor="middle">19</text><text x="1022.0" y="1002" text-anchor="middle">20</text><text x="1069.6" y="1002" text-anchor="middle">21</text><text x="1117.2" y="1002" text-anchor="middle">22</text><text x="1164.8" y="1002" text-anchor="middle">23</text><text x="1212.4" y="1002" text-anchor="middle">24</text><text x="1260.0" y="1002" text-anchor="middle">25</text><text x="1307.6" y="1002" text-anchor="middle">26</text><text x="1355.2" y="1002" text-anchor="middle">27</text><text x="1402.8" y="1002" text-anchor="middle">28</text></g>
<g fill="none" stroke-width="1.3" stroke-linejoin="round">
<!-- BOX A -->
<g stroke="#e8e49a">
<path d="M108.4 778V762H112.5L114.5 768"/>
<path d="M185.3 778V762H181L178.8 768"/>
<path d="M114.5 771V757Q114.5 747.6 124 747.6H169Q178.8 747.6 178.8 757V771"/>
<path d="M123 771V766Q123 757.7 131 757.7H161Q169.4 757.7 169.4 766V771"/>
<path d="M126 769Q127 762.8 134 762.8H158Q165 762.8 166.5 769"/>
<path d="M108.4 779H98Q91.8 781 91.8 786V850Q91.8 855 97 855H108.4"/>
<path d="M185.3 779H196Q201.9 781 201.9 786V850Q201.9 855 197 855H185.3"/>
<path d="M106.8 857H71V871H105M186 857H223V871H188"/>
<path d="M106.8 874H71V886L69 888V903L71 905V925L69 927V943L71 945V955H106.8"/>
<path d="M186 874H221.5V886L223.5 888V903L221.5 905V925L223.5 927V943L221.5 945V955H186"/>
<path d="M106.8 957H71V971.5H108L113 966V963.5"/>
<path d="M186 957H223V971.5H186L180 966V963.5"/>
<path d="M114 963.5V975Q114 984 123 984H170Q178.8 984 178.8 975V963.5"/>
<path d="M123 963.5V968Q123 976.7 131 976.7H161Q169.4 976.7 169.4 968V963.5"/>
<path d="M126 965Q127 970.4 134 970.4H158Q165 970.4 166.5 965"/>
</g>
<g stroke="#b8384e">
<path d="M108.4 778H185.3M108.4 778V857M185.3 778V857M108.4 857H185.3"/>
<path d="M106.8 857V971.5M186 857V971.5M106.8 874H186M106.8 956.3H186"/>
<path d="M114.5 771H123M169.4 771H178.8M114 963.5H123M169.4 963.5H178.8"/>
</g>
<g stroke="#d84a6a" stroke-width="2">
<path d="M88.4 875V955M204 875V955"/>
</g>
<g stroke="#ffe41a" stroke-width="2.2">
<path d="M106.8 883V906M106.8 924V946M186 883V906M186 924V946"/>
</g>
<!-- BOX B -->
<g stroke="#e8e49a">
<path d="M263 764H227V777H263M344 764H379V777H344"/>
<path d="M263 764H268L271.5 770"/>
<path d="M344 764H339L335.6 770"/>
<path d="M271.5 771.8V759Q271.5 750.4 280 750.4H327Q335.6 750.4 335.6 759V771.8"/>
<path d="M281 771.8V767Q281 758.7 289 758.7H318Q326.6 758.7 326.6 767V771.8"/>
<path d="M283.5 770Q285 764.2 291 764.2H316Q322 764.2 324 770"/>
<path d="M263 780.8H227.6V790L225.6 792V808L227.6 810V830L225.6 832V848L227.6 850V859.7H263"/>
<path d="M344 780.8H379.9V790L381.9 792V808L379.9 810V830L381.9 832V848L379.9 850V859.7H344"/>
<path d="M263 863H227V877H263M344 863H379V877H344"/>
<path d="M264.6 879H253Q248.4 879 248.4 884V950Q248.4 955 253 955H264.6"/>
<path d="M341.5 879H353Q358.4 879 358.4 884V950Q358.4 955 353 955H341.5"/>
<path d="M264.6 956.6V971.5H269L272 966V963.5"/>
<path d="M341.5 956.6V971.5H338L335.6 966V963.5"/>
<path d="M272 963.5V977Q272 986.3 281 986.3H327Q335.6 986.3 335.6 977V963.5"/>
<path d="M281 963.5V968Q281 976.7 289 976.7H318Q326.6 976.7 326.6 968V963.5"/>
<path d="M283.5 965Q285 971 291 971H316Q322 971 324 965"/>
</g>
<g stroke="#b8384e">
<path d="M263 764V877M344 764V877M263 779H344M263 861H344M263 877.7H344"/>
<path d="M264.6 877.7V956.6M341.5 877.7V956.6M264.6 956.6H341.5"/>
<path d="M271.5 771.8H281M326.6 771.8H335.6M272 963.5H281M326.6 963.5H335.6"/>
</g>
<g stroke="#d84a6a" stroke-width="2">
<path d="M244.6 782V859M361.2 782V859"/>
</g>
<g stroke="#f0e070" stroke-width="2.2">
<path d="M263 788.5V810.6M263 830V850.7M343.5 788.5V810.6M343.5 830V850.7"/>
</g>
</g>

<defs>
<linearGradient id="gHdr" x1="0" y1="0" x2="0" y2="1"><stop offset="0" stop-color="#e4eefb"/><stop offset="0.3" stop-color="#d6e4fa"/><stop offset="0.45" stop-color="#bedafa"/><stop offset="1" stop-color="#bcd8f8"/></linearGradient>
<linearGradient id="gTblH" x1="0" y1="0" x2="0" y2="1"><stop offset="0" stop-color="#ffffff"/><stop offset="1" stop-color="#f0f0f2"/></linearGradient>
<linearGradient id="gMetal" x1="0" y1="0" x2="1" y2="0"><stop offset="0" stop-color="#8a949a"/><stop offset="0.3" stop-color="#e8ecee"/><stop offset="0.5" stop-color="#c8ccd0"/><stop offset="0.8" stop-color="#a0a6aa"/><stop offset="1" stop-color="#70787e"/></linearGradient>
<linearGradient id="gDoc" x1="0" y1="0" x2="0" y2="1"><stop offset="0" stop-color="#c8c8c8"/><stop offset="1" stop-color="#f0f0f0"/></linearGradient>
<radialGradient id="gPlay" cx="0.45" cy="0.4" r="0.6"><stop offset="0" stop-color="#ffb020"/><stop offset="0.7" stop-color="#f09000"/><stop offset="1" stop-color="#d07000"/></radialGradient>
<linearGradient id="gGold" x1="0" y1="0" x2="0" y2="1"><stop offset="0" stop-color="#f8d040"/><stop offset="1" stop-color="#e0a000"/></linearGradient>
<linearGradient id="gGold2" x1="0" y1="0" x2="1" y2="1"><stop offset="0" stop-color="#fff0a0"/><stop offset="0.4" stop-color="#f0b000"/><stop offset="1" stop-color="#c08000"/></linearGradient>
</defs>
<path d="M1439.5 1004V106.5H1917" fill="none" stroke="#9aa0a8" stroke-width="1.2"/>
<rect x="1440" y="107" width="477" height="27" fill="url(#gHdr)"/>
<path d="M1440 134H1917" stroke="#a8b4c8" stroke-width="1.2"/>
<rect x="1440" y="134.6" width="477" height="24.5" fill="url(#gHdr)"/>
<rect x="1440" y="159" width="477" height="2" fill="#e0e8f2"/>
<g font-family="Liberation Sans, sans-serif" font-weight="bold" font-size="13" fill="#1f4a8a" letter-spacing="0.6">
<text x="1443.5" y="124.5">Bar Code</text><text x="1443.5" y="151">Material box</text>
</g>
<rect x="1659.5" y="167.5" width="21" height="20" fill="#e4e4e4"/>
<path d="M1660.5 170.0H1679.5 M1660.5 173.3H1679.5 M1660.5 176.6H1679.5 M1660.5 179.9H1679.5 M1660.5 183.2H1679.5 M1660.5 186.5H1679.5" stroke="#9a9a9a" stroke-width="1.5"/>
<path d="M1675.5 177.5V189.5M1669.5 183.5H1681.5" stroke="#6aaa20" stroke-width="3.5"/>
<path d="M1671.5 187.5L1677.5 187.5L1672.5 191.5Z" fill="#555"/>
<rect x="1699" y="167.5" width="21" height="20" fill="#e4e4e4"/>
<path d="M1700 170.0H1719 M1700 173.3H1719 M1700 176.6H1719 M1700 179.9H1719 M1700 183.2H1719 M1700 186.5H1719" stroke="#9a9a9a" stroke-width="1.5"/>
<path d="M1715 177.5V189.5M1709 183.5H1721" stroke="#6aaa20" stroke-width="3.5"/>
<path d="M1711 187.5L1717 187.5L1712 191.5Z" fill="#555"/>
<rect x="1736" y="167.5" width="21" height="20" fill="#e4e4e4"/>
<path d="M1737 170.0H1756 M1737 173.3H1756 M1737 176.6H1756 M1737 179.9H1756 M1737 183.2H1756 M1737 186.5H1756" stroke="#9a9a9a" stroke-width="1.5"/>
<path d="M1747 177.5L1757 188.5M1757 177.5L1747 188.5" stroke="#e05a30" stroke-width="3.2"/>
<path d="M1748 187.5L1754 187.5L1749 191.5Z" fill="#555"/>
<rect x="1774" y="167.5" width="21" height="20" fill="#e4e4e4"/>
<path d="M1775 170.0H1794 M1775 173.3H1794 M1775 176.6H1794 M1775 179.9H1794 M1775 183.2H1794 M1775 186.5H1794" stroke="#9a9a9a" stroke-width="1.5"/>
<path d="M1788 176.5L1795 182.5L1788 188.5Z" fill="#80b020"/>
<path d="M1786 187.5L1792 187.5L1787 191.5Z" fill="#555"/>
<rect x="1814" y="167.5" width="21" height="20" fill="#e4e4e4"/>
<path d="M1815 170.0H1834 M1815 173.3H1834 M1815 176.6H1834 M1815 179.9H1834 M1815 183.2H1834 M1815 186.5H1834" stroke="#9a9a9a" stroke-width="1.5"/>
<path d="M1828 176.5L1835 182.5L1828 188.5Z" fill="#80b020"/>
<path d="M1826 187.5L1832 187.5L1827 191.5Z" fill="#555"/>
<rect x="1853" y="167.5" width="21" height="20" fill="#e4e4e4"/>
<path d="M1854 170.0H1873 M1854 173.3H1873 M1854 176.6H1873 M1854 179.9H1873 M1854 183.2H1873 M1854 186.5H1873" stroke="#9a9a9a" stroke-width="1.5"/>
<path d="M1865 187.5L1871 187.5L1866 191.5Z" fill="#555"/>
<rect x="1449" y="201" width="452.5" height="466.5" fill="#fff" stroke="#8a8a8a" stroke-width="1.3"/>
<rect x="1450" y="202" width="450.5" height="26.5" fill="url(#gTblH)"/>
<path d="M1526.5 202V663.5 M1590.5 202V663.5 M1715 202V663.5 M1771.5 202V663.5 M1827 202V663.5 M1883 202V663.5" stroke="#e6e6e8" stroke-width="1"/>
<path d="M1452 252.3H1898.5 M1452 275.1H1898.5 M1452 297.9H1898.5 M1452 320.7H1898.5 M1452 343.5H1898.5 M1452 366.3H1898.5 M1452 389.1H1898.5 M1452 411.9H1898.5 M1452 434.7H1898.5 M1452 457.5H1898.5 M1452 480.3H1898.5 M1452 503.1H1898.5 M1452 525.9H1898.5 M1452 548.7H1898.5 M1452 571.5H1898.5 M1452 594.3H1898.5 M1452 617.1H1898.5 M1452 639.9H1898.5 M1452 662.7H1898.5" stroke="#e8e8ea" stroke-width="1"/>
<path d="M1450 228.3H1900.5" stroke="#d8d8dc" stroke-width="1.3"/>
<g font-family="Liberation Mono, monospace" font-size="13.5" fill="#111" text-anchor="middle">
<text x="1485" y="220.5">Lay...</text>
<text x="1557" y="220.5">Color</text>
<text x="1652" y="220.5">Tool name</text>
<text x="1741" y="220.5">Vi...</text>
<text x="1799" y="220.5">Lock</text>
<text x="1855" y="220.5">Ou...</text>
<text x="1489" y="243.5">1</text>
<text x="1652" y="243.5">CREASE</text>
<text x="1743" y="243.5">Y</text>
<text x="1800" y="243.5">N</text>
<text x="1856" y="243.5">Y</text>
<text x="1489" y="266">2</text>
<text x="1652" y="266">EOT</text>
<text x="1743" y="266">Y</text>
<text x="1800" y="266">N</text>
<text x="1856" y="266">Y</text>
</g>
<rect x="1529" y="232.8" width="60.5" height="16.5" fill="#f0306a" stroke="#111" stroke-width="1.3"/>
<rect x="1529" y="255.5" width="60.5" height="17" fill="#ffe000" stroke="#111" stroke-width="1.3"/>
<rect x="1440" y="674.5" width="477" height="26.299999999999955" fill="url(#gHdr)"/>
<path d="M1440 674.5H1917" stroke="#8090a4" stroke-width="1.4"/>
<text x="1443.5" y="692.5" font-family="Liberation Sans, sans-serif" font-weight="bold" font-size="13" fill="#1f3f7a" letter-spacing="0.6">Output settings:</text>
<rect x="1440" y="701.3" width="477" height="26.0" fill="url(#gHdr)"/>
<path d="M1440 701.3H1917" stroke="#8090a4" stroke-width="1.4"/>
<text x="1443.5" y="719.3" font-family="Liberation Sans, sans-serif" font-weight="bold" font-size="13" fill="#1f3f7a" letter-spacing="0.6">Feed mode:</text>
<rect x="1440" y="727.8" width="477" height="25.700000000000045" fill="url(#gHdr)"/>
<path d="M1440 727.8H1917" stroke="#8090a4" stroke-width="1.4"/>
<text x="1443.5" y="745.8" font-family="Liberation Sans, sans-serif" font-weight="bold" font-size="13" fill="#1f3f7a" letter-spacing="0.6">Docking settings:</text>
<rect x="1440" y="753.5" width="477" height="2" fill="#e2eaf4"/>
<rect x="1464.7" y="762.5" width="125" height="174" fill="#2f7888"/>
<rect x="1464.7" y="912" width="125" height="24.5" fill="#173c7a"/>
<text x="1527" y="930" font-family="Liberation Sans, sans-serif" font-weight="bold" font-size="15.5" fill="#fff" text-anchor="middle" letter-spacing="-0.3">1#MILL</text>
<rect x="1616.3" y="762.5" width="125" height="174" fill="#2f7888"/>
<rect x="1616.3" y="912" width="125" height="24.5" fill="#173c7a"/>
<text x="1676" y="930" font-family="Liberation Sans, sans-serif" font-weight="bold" font-size="15.5" fill="#fff" text-anchor="middle" letter-spacing="-0.3">2#EOT</text>
<rect x="1767.3" y="762.5" width="125" height="174" fill="#2f7888"/>
<rect x="1767.3" y="912" width="125" height="24.5" fill="#173c7a"/>
<text x="1843" y="930" font-family="Liberation Sans, sans-serif" font-weight="bold" font-size="15.5" fill="#fff" text-anchor="middle" letter-spacing="-0.3">3#CREASE</text>
<rect x="1525" y="769" width="11" height="7" rx="1.5" fill="#3a3a3a"/>
<rect x="1524" y="775.5" width="13" height="19" fill="url(#gMetal)"/>
<rect x="1514.5" y="793.5" width="30" height="9" fill="url(#gMetal)"/>
<rect x="1517" y="802" width="26.5" height="85" fill="url(#gMetal)"/>
<path d="M1517 869.5H1543.5" stroke="#7a8288" stroke-width="1"/>
<path d="M1521 887L1526 899H1535L1540 887Z" fill="url(#gMetal)"/>
<path d="M1530.5 899V912" stroke="#c0c4c8" stroke-width="1.6"/>
<rect x="1659" y="771" width="48.5" height="15" fill="#b8bcc0"/>
<rect x="1664" y="774" width="14" height="9" fill="#6a8a6a"/><rect x="1683" y="774" width="17" height="9" fill="#6a8a6a"/>
<rect x="1675" y="788.5" width="27" height="14.5" fill="#202428"/>
<rect x="1659" y="786" width="17" height="44" fill="#c8a030"/>
<rect x="1659.5" y="830" width="19" height="8" fill="#a0a4a0"/>
<rect x="1661" y="838" width="17.5" height="48" fill="#5a5e58"/>
<rect x="1661" y="886" width="17.5" height="21" fill="#2a2c28"/>
<rect x="1824" y="772" width="14" height="14.5" rx="1.5" fill="#222"/>
<rect x="1815" y="786" width="29.5" height="6.5" rx="2" fill="url(#gMetal)"/>
<rect x="1816.4" y="792" width="27.8" height="82" fill="url(#gMetal)"/>
<rect x="1819" y="874" width="23.7" height="31.5" rx="3" fill="url(#gMetal)"/>
<circle cx="1816" cy="807" r="1.3" fill="#dff"/><circle cx="1845" cy="807" r="1.3" fill="#dff"/>
<circle cx="1487.1" cy="970.9" r="26.3" fill="url(#gPlay)" stroke="#e08a00" stroke-width="1"/>
<circle cx="1487.1" cy="970.9" r="20" fill="none" stroke="#ffb830" stroke-width="1.2" opacity="0.7"/>
<path d="M1482 962.5L1497.5 971.5L1482 980.5Z" fill="#fff8e8"/>
<path d="M1547 948.2H1573.5L1575 958.4H1545.5Z" fill="#a05818"/>
<path d="M1545 962.5H1574L1580.5 985.3H1541Z" fill="url(#gGold)"/>
<rect x="1541" y="985.3" width="39.5" height="5" fill="#8a8a90"/>
<path d="M1535 975V994M1587 975V994" stroke="#707078" stroke-width="1.6"/>
<path d="M1613.0 944.6V967.3 M1618.0 944.6V967.3 M1623.1 944.6V967.3 M1628.2 944.6V967.3 M1633.2 944.6V967.3 M1638.2 944.6V967.3 M1643.3 944.6V967.3 M1648.3 944.6V967.3 M1653.4 944.6V967.3 M1658.5 944.6V967.3" stroke="#f0c830" stroke-width="2.2"/>
<path d="M1614 971V966Q1614 962.5 1620 962.5H1626Q1630 962.5 1630 966V971Z" fill="#e0a000"/>
<rect x="1609.3" y="970.9" width="56.3" height="25.8" rx="2.5" fill="url(#gGold)" stroke="#e8b020" stroke-width="0.8"/>
<path d="M1616.0 974Q1619.0 977 1616.0 980Q1613.0 983 1616.0 986Q1619.0 989 1616.0 992 M1621.0 974Q1624.0 977 1621.0 980Q1618.0 983 1621.0 986Q1624.0 989 1621.0 992 M1626.0 974Q1629.0 977 1626.0 980Q1623.0 983 1626.0 986Q1629.0 989 1626.0 992 M1631.0 974Q1634.0 977 1631.0 980Q1628.0 983 1631.0 986Q1634.0 989 1631.0 992 M1636.0 974Q1639.0 977 1636.0 980Q1633.0 983 1636.0 986Q1639.0 989 1636.0 992 M1641.0 974Q1644.0 977 1641.0 980Q1638.0 983 1641.0 986Q1644.0 989 1641.0 992 M1646.0 974Q1649.0 977 1646.0 980Q1643.0 983 1646.0 986Q1649.0 989 1646.0 992 M1651.0 974Q1654.0 977 1651.0 980Q1648.0 983 1651.0 986Q1654.0 989 1651.0 992 M1656.0 974Q1659.0 977 1656.0 980Q1653.0 983 1656.0 986Q1659.0 989 1656.0 992 M1661.0 974Q1664.0 977 1661.0 980Q1658.0 983 1661.0 986Q1664.0 989 1661.0 992" fill="none" stroke="#fff6d0" stroke-width="1.3"/>
<rect x="1687.8" y="944" width="51.5" height="52.7" rx="1.5" fill="#f0a828" stroke="#d89018" stroke-width="0.8"/>
<circle cx="1708.7" cy="978.1" r="12" fill="none" stroke="#a02808" stroke-width="7.5"/>
<path d="M1708.7 978V957M1708.7 977.5H1736.3" stroke="#4a1408" stroke-width="5"/>
<path d="M1700 959L1708.7 947L1717.5 959Z" fill="#4a1408"/>
<rect x="1763.2" y="944" width="51" height="52.7" rx="1.5" fill="#f0a828" stroke="#d89018" stroke-width="0.8"/>
<path d="M1778 952.4H1810.5V991.3H1770V976Q1778 973 1778 960Z" fill="#902000"/>
<path d="M1784.5 952.4V991.3 M1791.0 952.4V991.3 M1797.5 952.4V991.3 M1804.0 952.4V991.3 M1778 960.2H1810.5 M1778 968.0H1810.5 M1778 975.8H1810.5 M1778 983.6H1810.5" stroke="#f8a070" stroke-width="1"/>
<path d="M1773 958V975Q1773 985 1783 985H1810" fill="none" stroke="#4a1408" stroke-width="5.5"/>
<path d="M1765 960L1773 948.5L1781.5 960Z" fill="#4a1408"/>
<ellipse cx="1869.8" cy="969.7" rx="23" ry="21.5" fill="none" stroke="url(#gGold2)" stroke-width="6"/>
<path d="M1855 954L1885 985" stroke="url(#gGold2)" stroke-width="6"/>
<defs><filter id="thin" x="-5%" y="-20%" width="110%" height="140%"><feMorphology operator="erode" radius="0.5"/></filter></defs>
<g fill="#600404" opacity="0.92">
<rect x="1222" y="687.5" width="22" height="22"/><rect x="1251.5" y="687.5" width="22" height="22"/><rect x="1281" y="687.5" width="22" height="22"/>
<rect x="1222" y="717" width="22" height="22"/><rect x="1251.5" y="717" width="22" height="22"/><rect x="1281" y="717" width="22" height="22"/>
<rect x="1222" y="746.5" width="22" height="22"/><rect x="1251.5" y="746.5" width="22" height="22"/>
</g>
<g opacity="0.6" filter="url(#thin)"><text x="1329" y="744" font-family="Liberation Sans, sans-serif" font-size="44" fill="#565656" textLength="473" lengthAdjust="spacingAndGlyphs">Принтер-Плоттер.ру</text></g>

</svg>
</body></html>
